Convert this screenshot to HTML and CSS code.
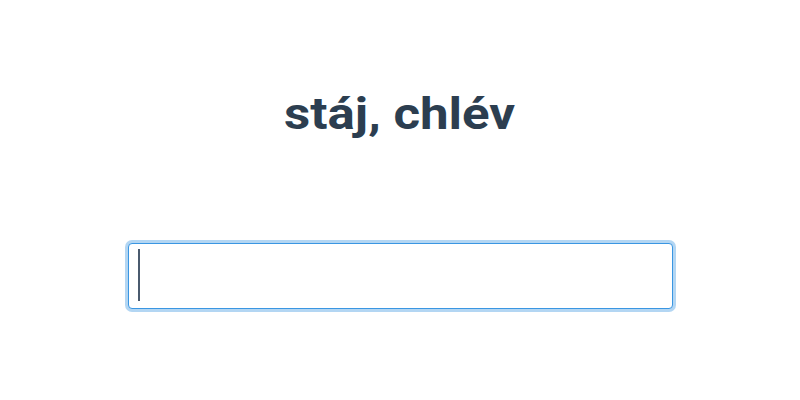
FILE: index.html
```html
<!DOCTYPE html>
<html lang="cs">
<head>
<meta charset="utf-8">
<link rel="stylesheet" href="styles.css">
</head>
<body>
<main class="app">
  <h1 class="word">stáj, chlév</h1>
  <div class="answer-row">
    <input class="answer" type="text" autofocus>
    <span class="caret"></span>
  </div>
</main>
</body>
</html>
```

FILE: styles.css
```css
html, body {
  margin: 0;
  padding: 0;
  background: #ffffff;
}
.app {
  width: 800px;
  height: 400px;
  box-sizing: border-box;
  padding-top: 84px;
  display: flex;
  flex-direction: column;
  align-items: center;
  font-family: Roboto, "Liberation Sans", sans-serif;
  color: #2c3e50;
}
.word {
  margin: 0;
  font-size: 44px;
  font-weight: 700;
  line-height: 60px;
  color: #2c3e50;
  transform: scaleX(1.16);
}
.answer-row {
  position: relative;
  margin-top: 99px;
  display: flex;
  justify-content: center;
}
.answer {
  width: 545px;
  height: 66px;
  box-sizing: border-box;
  border: 1px solid #3a96e2;
  border-radius: 4px;
  box-shadow: 0 0 0 3px rgba(66, 153, 225, 0.4);
  outline: none;
  padding: 0 10px;
  font-family: Roboto, "Liberation Sans", sans-serif;
  font-size: 44px;
  color: #2c3e50;
  caret-color: transparent;
  background: #ffffff;
}
.caret {
  position: absolute;
  left: 10px;
  top: 6px;
  width: 2px;
  height: 52px;
  background: #4a5a6e;
}
```
